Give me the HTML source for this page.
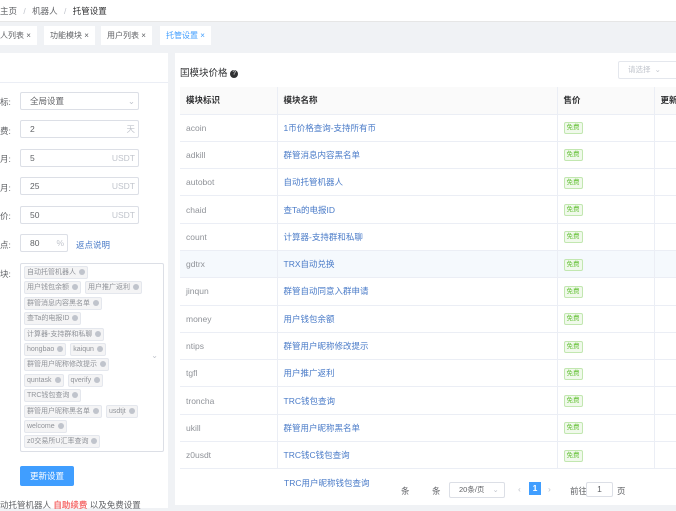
<!DOCTYPE html>
<html><head><meta charset="utf-8"><style>
*{box-sizing:border-box;margin:0;padding:0}
body{width:676px;height:508px;overflow:hidden;background:#f0f2f5;font-family:"Liberation Sans","Noto Sans CJK SC",sans-serif;font-size:8.5px;color:#606266;position:relative}
.abs{position:absolute}
.top{left:0;top:0;width:676px;height:22px;background:#fff;border-bottom:1px solid #e6e6e6}
.tab{position:absolute;top:26px;height:19px;background:#fff;line-height:19px;font-size:8px;color:#606266;padding:0 6px;white-space:nowrap}
.card{background:#fff;position:absolute}
.inp{position:absolute;left:20px;width:119px;height:18px;border:1px solid #dcdfe6;border-radius:2px;line-height:16px;padding-left:9px;color:#606266}
.inp .u{position:absolute;right:3px;top:0;color:#c0c4cc}
.lbl{position:absolute;left:0;color:#606266}
.tags{position:absolute;left:20px;top:263px;width:144px;height:189px;border:1px solid #dcdfe6;border-radius:2px;padding:2px 6px 0 3px}
.row{height:15.4px;white-space:nowrap}
.tag{display:inline-block;border:1px solid #e4e7ed;background:#f4f4f5;color:#909399;font-size:7px;height:13px;line-height:11px;padding:0 2px;margin-right:4px;border-radius:2px;white-space:nowrap;vertical-align:top}
.tag i{display:inline-block;width:6px;height:6px;border-radius:50%;background:#c0c4cc;margin-left:3px;vertical-align:-1px}
table{border-collapse:collapse;position:absolute;left:180px;top:87px;width:496px;table-layout:fixed}
td,th{border-bottom:1px solid #ebeef5;border-right:1px solid #ebeef5;height:27.3px;text-align:left;padding-left:6px;font-weight:normal;font-size:8.5px;white-space:nowrap;overflow:hidden}
th{background:#fafafa;color:#303133;font-weight:bold;height:27px}
td.k{color:#909399}
td.n{color:#4a7bc8}
.free{display:inline-block;border:1px solid #c2e7b0;background:#f0f9eb;color:#67c23a;font-size:6.5px;height:12px;line-height:10px;padding:0 2px;border-radius:2px}
</style></head><body>
<div class="abs top"></div>
<div class="abs" style="left:0;top:5px;color:#606266">主页 <span style="color:#c0c4cc;margin:0 4px">/</span> 机器人 <span style="color:#c0c4cc;margin:0 4px">/</span> <span style="color:#303133">托管设置</span></div>
<div class="tab" style="left:0;padding-left:0">人列表 ×</div>
<div class="tab" style="left:44px">功能模块 ×</div>
<div class="tab" style="left:101px">用户列表 ×</div>
<div class="tab" style="left:160px;color:#409eff">托管设置 ×</div>

<div class="card" style="left:0;top:53px;width:168px;height:455px">
<div class="abs" style="left:0;top:29px;width:168px;border-top:1px solid #ebeef5"></div>
</div>
<div class="lbl" style="top:96px">标:</div>
<div class="inp" style="top:92px">全局设置<span class="u">⌄</span></div>
<div class="lbl" style="top:125px">费:</div>
<div class="inp" style="top:120px">2<span class="u">天</span></div>
<div class="lbl" style="top:153px">月:</div>
<div class="inp" style="top:149px">5<span class="u">USDT</span></div>
<div class="lbl" style="top:182px">月:</div>
<div class="inp" style="top:177px">25<span class="u">USDT</span></div>
<div class="lbl" style="top:210px">价:</div>
<div class="inp" style="top:206px">50<span class="u">USDT</span></div>
<div class="lbl" style="top:239px">点:</div>
<div class="inp" style="top:234px;width:48px">80<span class="u">%</span></div>
<div class="abs" style="left:76px;top:239px;color:#4a7bc8">返点说明</div>
<div class="lbl" style="top:268px">块:</div>
<div class="tags">
<div class="row"><span class="tag">自动托管机器人<i></i></span></div>
<div class="row"><span class="tag">用户钱包余额<i></i></span><span class="tag">用户推广返利<i></i></span></div>
<div class="row"><span class="tag">群管消息内容黑名单<i></i></span></div>
<div class="row"><span class="tag">查Ta的电报ID<i></i></span></div>
<div class="row"><span class="tag">计算器-支持群和私聊<i></i></span></div>
<div class="row"><span class="tag">hongbao<i></i></span><span class="tag">kaiqun<i></i></span></div>
<div class="row"><span class="tag">群管用户昵称修改提示<i></i></span></div>
<div class="row"><span class="tag">quntask<i></i></span><span class="tag">qverify<i></i></span></div>
<div class="row"><span class="tag">TRC钱包查询<i></i></span></div>
<div class="row"><span class="tag">群管用户昵称黑名单<i></i></span><span class="tag">usdtjt<i></i></span></div>
<div class="row"><span class="tag">welcome<i></i></span></div>
<div class="row"><span class="tag">z0交易所U汇率查询<i></i></span></div>
<span class="abs" style="right:5px;top:88px;color:#c0c4cc;font-size:8px;line-height:8px">⌄</span>
</div>
<div class="abs" style="left:20px;top:466px;width:54px;height:20px;background:#409eff;border-radius:2px;color:#fff;text-align:center;line-height:20px">更新设置</div>
<div class="abs" style="left:0;top:499px">动托管机器人 <b style="color:#f56c6c">自助续费</b> 以及免费设置</div>

<div class="card" style="left:175px;top:53px;width:501px;height:452px"></div>
<div class="abs" style="left:180px;top:65px;font-size:9.5px;color:#303133">囯模块价格 <span style="display:inline-block;width:8px;height:8px;border-radius:50%;background:#303133;color:#fff;font-size:6px;line-height:8px;text-align:center;vertical-align:1px">?</span></div>
<div class="abs" style="left:618px;top:61px;width:64px;height:18px;border:1px solid #e4e7ed;border-radius:2px;color:#c0c4cc;line-height:16px;padding-left:9px;font-size:7.5px">请选择 &nbsp;⌄</div>
<table>
<colgroup><col style="width:97px"><col style="width:280px"><col style="width:97px"><col style="width:22px"></colgroup>
<tr><th>模块标识</th><th>模块名称</th><th>售价</th><th>更新</th></tr>
<tr><td class="k">acoin</td><td class="n">1币价格查询-支持所有币</td><td><span class="free">免费</span></td><td></td></tr>
<tr><td class="k">adkill</td><td class="n">群管消息内容黑名单</td><td><span class="free">免费</span></td><td></td></tr>
<tr><td class="k">autobot</td><td class="n">自动托管机器人</td><td><span class="free">免费</span></td><td></td></tr>
<tr><td class="k">chaid</td><td class="n">查Ta的电报ID</td><td><span class="free">免费</span></td><td></td></tr>
<tr><td class="k">count</td><td class="n">计算器-支持群和私聊</td><td><span class="free">免费</span></td><td></td></tr>
<tr style="background:#f5f9fd"><td class="k">gdtrx</td><td class="n">TRX自动兑换</td><td><span class="free">免费</span></td><td></td></tr>
<tr><td class="k">jinqun</td><td class="n">群管自动同意入群申请</td><td><span class="free">免费</span></td><td></td></tr>
<tr><td class="k">money</td><td class="n">用户钱包余额</td><td><span class="free">免费</span></td><td></td></tr>
<tr><td class="k">ntips</td><td class="n">群管用户昵称修改提示</td><td><span class="free">免费</span></td><td></td></tr>
<tr><td class="k">tgfl</td><td class="n">用户推广返利</td><td><span class="free">免费</span></td><td></td></tr>
<tr><td class="k">troncha</td><td class="n">TRC钱包查询</td><td><span class="free">免费</span></td><td></td></tr>
<tr><td class="k">ukill</td><td class="n">群管用户昵称黑名单</td><td><span class="free">免费</span></td><td></td></tr>
<tr><td class="k">z0usdt</td><td class="n">TRC钱C钱包查询</td><td><span class="free">免费</span></td><td></td></tr>
</table>
<div class="abs" style="left:284px;top:477px;color:#4a7bc8">TRC用户昵称钱包查询</div>
<div class="abs" style="left:401px;top:485px">条</div>
<div class="abs" style="left:432px;top:485px">条</div>
<div class="abs" style="left:449px;top:482px;width:56px;height:16px;border:1px solid #dcdfe6;border-radius:2px;line-height:14px;padding-left:9px;font-size:7.5px">20条/页 <span style="color:#c0c4cc;margin-left:6px">⌄</span></div>
<div class="abs" style="left:518px;top:484px;color:#c0c4cc">‹</div>
<div class="abs" style="left:529px;top:482px;width:12px;height:13px;background:#409eff;color:#fff;text-align:center;line-height:13px;font-weight:bold">1</div>
<div class="abs" style="left:548px;top:484px;color:#c0c4cc">›</div>
<div class="abs" style="left:570px;top:485px">前往</div>
<div class="abs" style="left:586px;top:482px;width:27px;height:15px;border:1px solid #dcdfe6;border-radius:2px;text-align:center;line-height:13px">1</div>
<div class="abs" style="left:617px;top:485px">页</div>
</body></html>
